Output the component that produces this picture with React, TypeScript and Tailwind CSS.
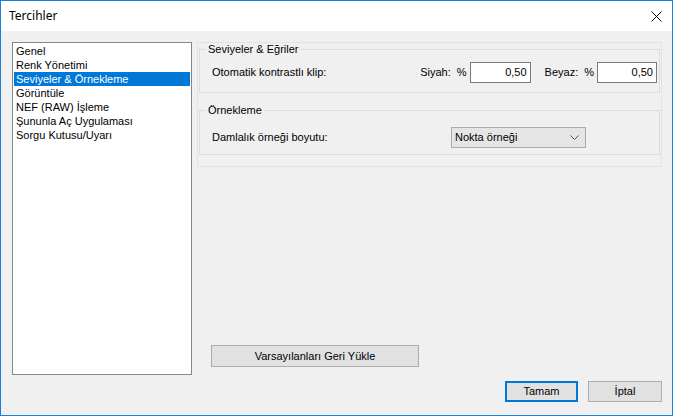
import React from "react";

const items = [
  "Genel",
  "Renk Yönetimi",
  "Seviyeler & Örnekleme",
  "Görüntüle",
  "NEF (RAW) İşleme",
  "Şununla Aç Uygulaması",
  "Sorgu Kutusu/Uyarı",
];

const font = { fontFamily: "Tahoma, 'Liberation Sans', Arial, sans-serif" };

export default function App() {
  return (
    <div
      className="w-[673px] h-[416px] border border-[#1c7ed6] flex flex-col bg-[#f0f0f0] text-[11px] text-black overflow-hidden"
      style={font}
    >
      <div className="h-[30px] bg-white flex items-center justify-between pl-[8px] pr-[10px] shrink-0">
        <span className="text-[12px] font-['Noto_Sans',sans-serif] text-black leading-none">Tercihler</span>
        <svg width="11" height="11" viewBox="0 0 11 11" className="text-black">
          <path d="M0.5 0.5 L10.5 10.5 M10.5 0.5 L0.5 10.5" stroke="currentColor" strokeWidth="1" />
        </svg>
      </div>
      <div className="flex-1 flex flex-col pl-[11px] pr-[10px] pt-[11px]">
        <div className="flex h-[333px]">
          <div className="w-[180px] h-full bg-white border border-[#828790] pt-[1px] px-[1px]">
            {items.map((it, i) => (
              <div
                key={it}
                className={
                  "h-[14px] leading-[14px] pl-[2px] " +
                  (i === 2 ? "bg-[#0078d7] text-white" : "")
                }
              >
                {it}
              </div>
            ))}
          </div>
          <div className="flex-1 ml-[5px] flex flex-col">
            <div className="border border-[#e3e3e3] px-[1px] h-[125px]">
              <fieldset className="h-[50px] border border-[#dcdcdc] pl-[12px] pr-[2px] pt-0 pb-0">
                <legend className="px-[2px] -ml-[6px] leading-[13px]">Seviyeler &amp; Eğriler</legend>
                <div className="flex items-center h-[21px] mt-[6px]">
                  <span className="flex-1">Otomatik kontrastlı klip:</span>
                  <span>Siyah:</span>
                  <span className="ml-[6px] mr-[3px]">%</span>
                  <div className="w-[61px] h-[21px] bg-white border border-[#7a7a7a] flex items-center justify-end pr-[3px]">0,50</div>
                  <span className="ml-[14px]">Beyaz:</span>
                  <span className="ml-[6px] mr-[3px]">%</span>
                  <div className="w-[60px] h-[21px] bg-white border border-[#7a7a7a] flex items-center justify-end pr-[3px]">0,50</div>
                </div>
              </fieldset>
              <fieldset className="h-[51px] mt-[11px] border border-[#dcdcdc] pl-[12px] pr-[2px] pt-0 pb-0">
                <legend className="px-[2px] -ml-[6px] leading-[13px]">Örnekleme</legend>
                <div className="flex items-center h-[21px] mt-[10px]">
                  <span className="w-[239px]">Damlalık örneği boyutu:</span>
                  <div className="w-[135px] h-[21px] bg-[#e5e5e5] border border-[#acacac] flex items-center justify-between pl-[3px] pr-[6px]">
                    <span>Nokta örneği</span>
                    <svg width="9" height="6" viewBox="0 0 9 6">
                      <path d="M0.5 0.5 L4.5 4.5 L8.5 0.5" stroke="#555" fill="none" strokeWidth="1" />
                    </svg>
                  </div>
                </div>
              </fieldset>
            </div>
            <div className="flex-1" />
            <div className="pl-[14px] pb-[8px]">
              <div className="w-[208px] h-[22px] bg-[#e1e1e1] border border-[#adadad] flex items-center justify-center">
                Varsayılanları Geri Yükle
              </div>
            </div>
          </div>
        </div>
        <div className="flex justify-end mt-[6px] gap-[10px]">
          <div className="w-[73px] h-[21px] bg-[#e1e1e1] border-2 border-[#0078d7] flex items-center justify-center">
            Tamam
          </div>
          <div className="w-[74px] h-[21px] bg-[#e1e1e1] border border-[#adadad] flex items-center justify-center">
            İptal
          </div>
        </div>
      </div>
    </div>
  );
}
